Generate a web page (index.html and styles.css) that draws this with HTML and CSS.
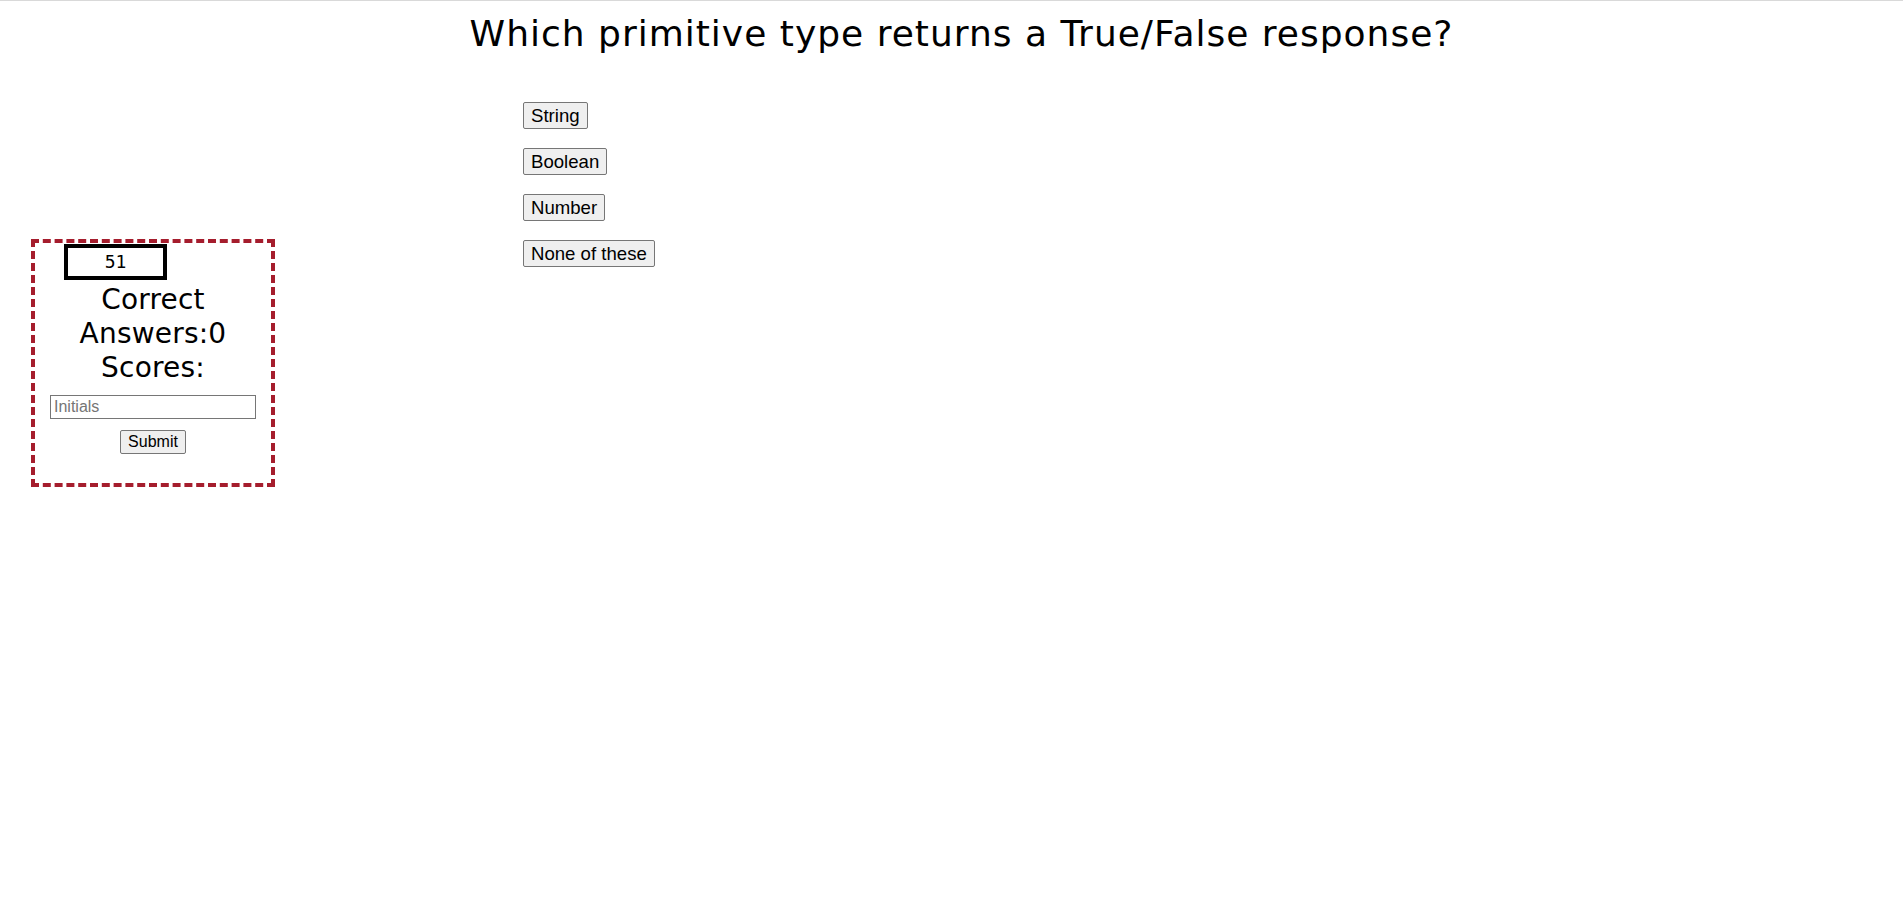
FILE: index.html
```html
<!DOCTYPE html>
<html lang="en">
<head>
<meta charset="utf-8">
<title>Quiz</title>
<link rel="stylesheet" href="styles.css">
</head>
<body>
<header class="top">
  <h1 class="question">Which primitive type returns a True/False response?</h1>
</header>
<main class="layout">
  <aside class="scorebox">
    <div class="timer">51</div>
    <div class="stats">Correct<br>Answers:0<br>Scores:</div>
    <input class="initials" type="text" placeholder="Initials">
    <button class="submit" type="button">Submit</button>
  </aside>
  <section class="answers">
    <button class="answer" type="button">String</button>
    <button class="answer" type="button">Boolean</button>
    <button class="answer" type="button">Number</button>
    <button class="answer" type="button">None of these</button>
  </section>
</main>
</body>
</html>
```

FILE: styles.css
```css
html, body {
  margin: 0;
  padding: 0;
  background: #ffffff;
}

body {
  font-family: "DejaVu Sans", Verdana, sans-serif;
  color: #000000;
}

.top {
  border-top: 1px solid #d9d9d9;
}

.question {
  margin: 13px 0 0;
  font-size: 36px;
  line-height: 40px;
  letter-spacing: 1px;
  font-weight: normal;
  text-align: center;
  padding-left: 20px;
}

.layout {
  display: flex;
  align-items: flex-start;
}

.scorebox {
  margin: 185px 0 0 31px;
  width: 244px;
  box-sizing: border-box;
  border: 4px dashed #a51d2d;
  padding: 0 0 29px;
  display: flex;
  flex-direction: column;
}

.timer {
  margin: 1px 0 0 29px;
  width: 103px;
  height: 36px;
  box-sizing: border-box;
  border: 4px solid #000000;
  font-family: "DejaVu Sans Mono", Consolas, monospace;
  font-size: 18px;
  line-height: 28px;
  text-align: center;
}

.stats {
  margin-top: 3px;
  font-size: 28px;
  line-height: 34px;
  letter-spacing: 0.2px;
  text-align: center;
}

.initials {
  align-self: center;
  margin: 10px 0 0;
  width: 206px;
  height: 24px;
  box-sizing: border-box;
  border: 1px solid #767676;
  border-radius: 0;
  padding: 1px 3px;
  font-family: "Liberation Sans", Arial, sans-serif;
  font-size: 16px;
  outline: none;
}

.initials::placeholder {
  color: #757575;
}

.submit {
  align-self: center;
  margin: 11px 0 0;
  height: 24px;
  box-sizing: border-box;
  padding: 1px 7px;
  border: 1px solid #767676;
  border-radius: 2px;
  background: #efefef;
  font-family: "Liberation Sans", Arial, sans-serif;
  font-size: 16px;
  line-height: 20px;
  color: #000000;
}

.answers {
  margin: 48px 0 0 248px;
  display: flex;
  flex-direction: column;
  align-items: flex-start;
  gap: 19px;
}

.answer {
  height: 27px;
  box-sizing: border-box;
  padding: 2px 7px;
  border: 1px solid #767676;
  border-radius: 2px;
  background: #efefef;
  font-family: "Liberation Sans", Arial, sans-serif;
  font-size: 18.6px;
  line-height: 21px;
  color: #000000;
}
```
